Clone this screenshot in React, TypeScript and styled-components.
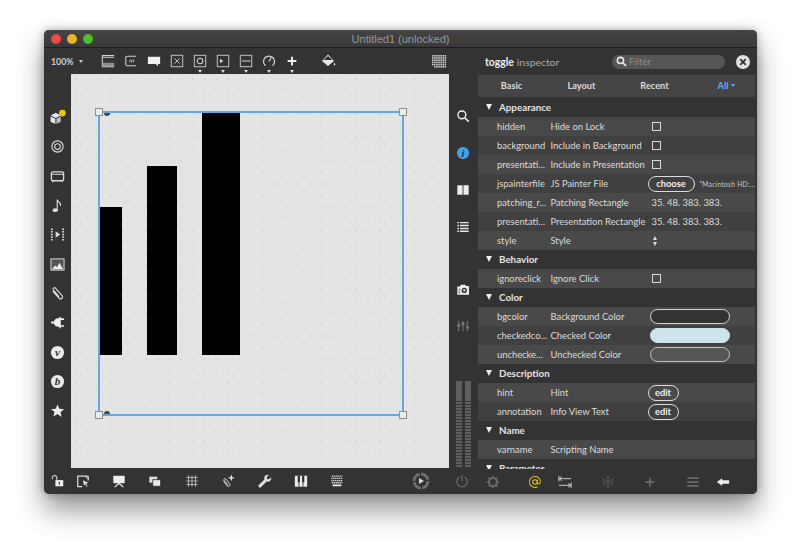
import React from "react";
import styled, { createGlobalStyle } from "styled-components";

const Global = createGlobalStyle`
  html, body { margin: 0; padding: 0; background: #fff; width: 800px; height: 553px; overflow: hidden; }
  * { box-sizing: border-box; }
`;

const Page = styled.div`
  width: 800px;
  height: 553px;
  padding: 30px 43px 59px 44px;
  background: #fff;
  font-family: Lato, "Open Sans", sans-serif;
`;
const Window = styled.div`
  width: 713px;
  height: 464px;
  display: flex;
  flex-direction: column;
  border-radius: 5px;
  overflow: hidden;
  background: #333;
  box-shadow: 0 16px 28px rgba(0, 0, 0, 0.42), 0 0 10px rgba(0, 0, 0, 0.3);
`;
const TitleBar = styled.div`
  height: 18px;
  flex: none;
  position: relative;
  display: flex;
  align-items: center;
  justify-content: center;
  background: linear-gradient(#444, #393939);
  border-bottom: 1px solid #1c1c1c;
  color: #979797;
  font: 11px "Liberation Sans", Arial, sans-serif;
`;
const Lights = styled.div`
  position: absolute;
  left: 7px;
  top: 4px;
  display: flex;
  gap: 6px;
`;
const Light = styled.span<{ $c: string }>`
  width: 10px;
  height: 10px;
  border-radius: 50%;
  background: ${(p) => p.$c};
`;
const Body = styled.div`
  flex: 1;
  min-height: 0;
  display: flex;
`;
const Main = styled.div`
  width: 433px;
  flex: none;
  display: grid;
  grid-template-columns: 27px 378px 28px;
  grid-template-rows: 26px 394px 26px;
`;
const TopBar = styled.div`
  grid-column: 1 / -1;
  display: flex;
  align-items: center;
  padding: 0 26.5px 0 7px;
  color: #d8d8d8;
`;
const Zoom = styled.div`
  width: 45.5px;
  display: flex;
  align-items: center;
  gap: 5px;
  font-size: 8.8px;
  font-weight: 700;
  color: #cfcfcf;
`;
const Caret = styled.span`
  width: 0;
  height: 0;
  border-left: 2.5px solid transparent;
  border-right: 2.5px solid transparent;
  border-top: 3.5px solid #ccc;
`;
const ToolButton = styled.div<{ $gapLeft?: number; $auto?: boolean }>`
  width: 23px;
  height: 26px;
  flex: none;
  display: flex;
  align-items: center;
  justify-content: center;
  margin-left: ${(p) => (p.$auto ? "auto" : `${p.$gapLeft || 0}px`)};
  color: #d4d4d4;
  position: relative;
`;
const MenuMark = styled.span`
  position: absolute;
  bottom: 1px;
  left: 9px;
  width: 0;
  height: 0;
  border-left: 2.5px solid transparent;
  border-right: 2.5px solid transparent;
  border-top: 3px solid #ddd;
`;
const LeftRail = styled.div`
  display: flex;
  flex-direction: column;
  padding-top: 29px;
`;
const RailSlot = styled.div<{ $h: number }>`
  height: ${(p) => p.$h}px;
  flex: none;
  display: flex;
  align-items: center;
  justify-content: center;
  color: #dcdcdc;
`;
const Canvas = styled.div`
  position: relative;
  background-color: #e4e4e4;
  background-image: radial-gradient(circle at center, #c0c0c0 0, #c0c0c0 0.5px, transparent 0.8px);
  background-size: 11.7px 11.7px;
  background-position: -1px -1px;
  overflow: hidden;
`;
const Bar = styled.div<{ $l: number; $t: number; $w: number; $h: number }>`
  position: absolute;
  left: ${(p) => p.$l}px;
  top: ${(p) => p.$t}px;
  width: ${(p) => p.$w}px;
  height: ${(p) => p.$h}px;
  background: #000;
`;
const Selection = styled.div`
  position: absolute;
  left: 27px;
  top: 37px;
  width: 306px;
  height: 305px;
  border: 2px solid #68a8e2;
`;
const Handle = styled.span<{ $x: "l" | "r"; $y: "t" | "b" }>`
  position: absolute;
  ${(p) => (p.$x === "l" ? "left: -5px;" : "right: -5px;")}
  ${(p) => (p.$y === "t" ? "top: -5px;" : "bottom: -5px;")}
  width: 8px;
  height: 8px;
  background: #e6eef6;
  border: 1px solid #8e8e8e;
`;
const Inlet = styled.span<{ $y: "t" | "b" }>`
  position: absolute;
  left: 4px;
  ${(p) => (p.$y === "t" ? "top: 0;" : "bottom: 0;")}
  width: 6px;
  height: 3px;
  background: #444;
  border-radius: ${(p) => (p.$y === "t" ? "0 0 3px 3px" : "3px 3px 0 0")};
`;
const RightRail = styled.div`
  display: flex;
  flex-direction: column;
  align-items: center;
  padding-top: 32px;
`;
const Meters = styled.div`
  margin-top: auto;
  margin-bottom: 1px;
  display: flex;
  gap: 3px;
`;
const Meter = styled.div`
  width: 6px;
  height: 86px;
  background: repeating-linear-gradient(#5f5f5f 0 2px, #383838 2px 3px);
  position: relative;
  &::before {
    content: "";
    position: absolute;
    inset: 0 0 auto 0;
    height: 19px;
    background: #5f5f5f;
  }
`;
const BottomBar = styled.div`
  grid-column: 1 / -1;
  display: flex;
  align-items: center;
  padding-left: 2.5px;
`;
const BottomButton = styled.div<{ $w: number; $lead?: number }>`
  width: ${(p) => p.$w}px;
  margin-left: ${(p) => p.$lead || 0}px;
  flex: none;
  display: flex;
  justify-content: center;
  align-items: center;
  color: #d8d8d8;
`;
const Inspector = styled.div`
  flex: 1;
  min-width: 0;
  display: flex;
  flex-direction: column;
  padding: 0 2px 0 1px;
  background: #333;
`;
const InspectorHead = styled.div`
  height: 27px;
  flex: none;
  display: flex;
  align-items: center;
  padding: 0 5px 0 7px;
  font-size: 10.4px;
  color: #aaa;
`;
const HeadBold = styled.b`
  color: #eee;
  margin-right: 3px;
`;
const Filter = styled.div`
  margin-left: auto;
  width: 113px;
  height: 14px;
  display: flex;
  align-items: center;
  gap: 2px;
  padding-left: 4px;
  border-radius: 7px;
  background: #565656;
  color: #8c8c8c;
  font-size: 9.6px;
`;
const Close = styled.div`
  width: 14px;
  height: 14px;
  margin-left: 11px;
  border-radius: 50%;
  background: #e2e2e2;
  display: flex;
  align-items: center;
  justify-content: center;
`;
const Tabs = styled.div`
  height: 22px;
  flex: none;
  display: grid;
  grid-template-columns: 67px 73px 73px 71px;
  align-items: center;
  justify-items: center;
  padding-bottom: 2px;
  background: #454545;
  font-size: 9.2px;
  font-weight: 700;
  color: #dadada;
`;
const AllTab = styled.span`
  display: flex;
  align-items: center;
  gap: 3px;
  color: #5fb0ee;
`;
const BlueCaret = styled.span`
  width: 0;
  height: 0;
  border-left: 2.5px solid transparent;
  border-right: 2.5px solid transparent;
  border-top: 3px solid #5fb0ee;
`;
const List = styled.div`
  flex: 1;
  min-height: 0;
  overflow: hidden;
  margin-top: 1px;
`;
const SectionHead = styled.div`
  height: 19px;
  display: flex;
  align-items: center;
  padding: 0 0 1px 8px;
  gap: 7px;
  font-size: 9.8px;
  font-weight: 700;
  color: #e3e3e3;
  background: #333;
`;
const Tri = styled.span`
  width: 0;
  height: 0;
  border-left: 3.5px solid transparent;
  border-right: 3.5px solid transparent;
  border-top: 6px solid #eee;
`;
const Row = styled.div<{ $alt: boolean }>`
  height: 19px;
  display: grid;
  grid-template-columns: 53.5px 101px 1fr;
  align-items: center;
  padding-left: 19px;
  background: ${(p) => (p.$alt ? "#404040" : "#494949")};
  font-size: 9.4px;
  color: #dcdcdc;
  white-space: nowrap;
`;
const Value = styled.div`
  display: flex;
  align-items: center;
  gap: 5px;
  min-width: 0;
`;
const Check = styled.span`
  width: 9px;
  height: 9px;
  border: 1px solid #d8d8d8;
`;
const PillButton = styled.span<{ $w: number }>`
  width: ${(p) => p.$w}px;
  height: 16px;
  margin-left: -4px;
  flex: none;
  display: flex;
  align-items: center;
  justify-content: center;
  border: 1px solid #dcdcdc;
  border-radius: 8px;
  font-weight: 700;
  color: #f0f0f0;
`;
const PathText = styled.span`
  font-size: 6.6px;
  letter-spacing: 0.3px;
  color: #ccc;
`;
const Swatch = styled.span<{ $fill: string; $line: string }>`
  width: 80px;
  height: 15px;
  margin-left: -2px;
  border-radius: 8px;
  background: ${(p) => p.$fill};
  border: 1px solid ${(p) => p.$line};
`;
const Stepper = styled.span`
  display: flex;
  flex-direction: column;
  gap: 2px;
  margin-left: 1px;
`;
const StepUp = styled.span`
  width: 0;
  height: 0;
  border-left: 2.5px solid transparent;
  border-right: 2.5px solid transparent;
  border-bottom: 4px solid #ddd;
`;
const StepDown = styled(StepUp)`
  border-bottom: 0;
  border-top: 4px solid #ddd;
`;
const InspectorFoot = styled.div`
  height: 25px;
  flex: none;
  display: flex;
  align-items: center;
  background: #333;
`;
const FootIcon = styled.div<{ $ml: number }>`
  margin-left: ${(p) => p.$ml}px;
  width: 14px;
  display: flex;
  justify-content: center;
`;

type IconProps = { s?: number; children: React.ReactNode };
const Svg = ({ s = 16, children }: IconProps) => (
  <svg width={s} height={s} viewBox="0 0 16 16" fill="none" stroke="none">
    {children}
  </svg>
);
const sw = { stroke: "currentColor", strokeWidth: 1.2, fill: "none" };
const f = { fill: "currentColor" };

const icons: Record<string, React.ReactNode> = {
  panel: (<><path d="M1.5 1v14" {...sw} /><path d="M2 1.6h13M2 3.6h13" {...sw} /><rect x="2" y="10" width="13" height="4" fill="#8b8b8b" /><path d="M2 14.5h13" {...sw} /></>),
  comment: (<><path d="M14 2.5H4a2 2 0 0 0-2 2v7a2 2 0 0 0 2 2h10" {...sw} /><path d="M6.5 9.5l.8-3M8.5 9.5l.8-3M10.5 9.5l.8-3" stroke="currentColor" strokeWidth="1" /></>),
  bubble: (<path d="M1 3h14v8.5h-2.5V14L10 11.5H1z" fill="#f0f0f0" />),
  xbox: (<><rect x="1.5" y="1.5" width="13" height="13" stroke="#bbb" strokeWidth="1.2" /><path d="M5 5l6 6M11 5l-6 6" {...sw} strokeWidth={1} /></>),
  obox: (<><rect x="1.5" y="1.5" width="13" height="13" stroke="#bbb" strokeWidth="1.2" /><circle cx="8" cy="8" r="3.2" {...sw} /></>),
  pbox: (<><rect x="1.5" y="1.5" width="13" height="13" stroke="#bbb" strokeWidth="1.2" /><path d="M4.5 5.5l4 2.5-4 2.5z" {...f} /></>),
  mbox: (<><rect x="1.5" y="1.5" width="13" height="13" stroke="#bbb" strokeWidth="1.2" /><path d="M3 8h10" {...sw} /></>),
  dial: (<><path d="M4 13.5a6.3 6.3 0 1 1 8 0" {...sw} strokeWidth={1.4} /><path d="M8 8.5l2.5-4.5" {...sw} strokeWidth={1.4} /></>),
  plus: (<path d="M8 3v10M3 8h10" stroke="#eee" strokeWidth="2.2" />),
  bucket: (<><path d="M8 1.5L14 8l-6 5L2 8z" fill="#e8e8e8" /><path d="M3.5 7L8 3l4.5 4z" fill="#333" /><path d="M14.5 9.5c1 1.6 1 3 0 3s-1-1.4 0-3z" fill="#e8e8e8" /></>),
  matrix: (<>{Array.from({ length: 6 }).map((_, y) => Array.from({ length: 7 }).map((_, x) => (x + 6 - y >= 2 ? <rect key={x + "-" + y} x={1 + x * 2.1} y={2 + y * 2.2} width="1.5" height="1.6" fill="#cfcfcf" /> : null)))}</>),
  cubes: (<><path d="M1.5 6L6.5 3.6 11 6 6.5 8.4z" fill="#e8e8e8" /><path d="M1.5 7L6 9.2v5L1.5 12z" fill="#e8e8e8" /><path d="M11 7L7 9.2v5l4-2.2z" fill="#bdbdbd" /><circle cx="12.6" cy="3.8" r="3.2" fill="#e8c80e" /></>),
  target: (<><circle cx="8" cy="8" r="6" {...sw} /><circle cx="8" cy="8" r="3" {...sw} /></>),
  strip: (<><rect x="1.5" y="3" width="13" height="9.5" rx="1.5" {...sw} strokeWidth={1.4} /><path d="M1.5 5.6h13" {...sw} /><path d="M3 12.5v1.5M13 12.5v1.5" {...sw} /></>),
  note: (<><ellipse cx="5.5" cy="13" rx="2.8" ry="2" {...f} /><path d="M7.7 13V1.5c0 2.5 4.3 3 3.5 7" {...sw} /></>),
  mediaplay: (<><path d="M6 4.5l5 3.5-5 3.5z" {...f} /><path d="M2 1.5v13M14 1.5v13" stroke="currentColor" strokeWidth="2" strokeDasharray="1.6 1.2" /></>),
  image: (<><rect x="1" y="2" width="14" height="12" fill="#555" stroke="#ddd" strokeWidth="1" /><path d="M2 13l3.5-4 2 2 2.5-5 4 7z" fill="#eee" /></>),
  clip: (<path d="M3 5.5l6.5 7.5a2.2 2.2 0 0 0 3.4-2.8L6 2.5a1.5 1.5 0 0 0-2.4 1.8l6.2 7.3" stroke="currentColor" strokeWidth="1.2" />),
  plug: (<path d="M1 7h3.2C5 4.6 6.5 3.5 8.5 3.5H10V2h1.5v1.5H15v1.7h-3.5v5.6H15v1.7h-3.5V14H10v-1.5H8.5C6.5 12.5 5 11.4 4.2 9H1z" fill="#eee" />),
  vcoin: (<><circle cx="8" cy="8" r="7" fill="#eaeaea" /><text x="8" y="11.6" textAnchor="middle" fontFamily="Liberation Serif, serif" fontSize="12" fontStyle="italic" fontWeight="700" fill="#333">v</text></>),
  bcoin: (<><circle cx="8" cy="8" r="7" fill="#eaeaea" /><text x="8" y="12" textAnchor="middle" fontFamily="Liberation Serif, serif" fontSize="12" fontStyle="italic" fontWeight="700" fill="#333">b</text></>),
  star: (<path d="M8 1.5l2 4.7 5 .4-3.8 3.3 1.2 5L8 11.8l-4.4 2.6 1.2-5L1 6.6l5-.4z" fill="#eee" />),
  search: (<><circle cx="6.7" cy="6.7" r="4.5" stroke="#eee" strokeWidth="1.6" /><path d="M10 10l4.5 4.5" stroke="#eee" strokeWidth="2" /></>),
  info: (<><circle cx="8" cy="8" r="7" fill="#3aa5ee" /><text x="8" y="12" textAnchor="middle" fontFamily="Liberation Serif, serif" fontSize="11.5" fontStyle="italic" fontWeight="700" fill="#22303c">i</text></>),
  book: (<path d="M1.5 2.5h6v11h-6zM8.5 2.5h6v11h-6z" fill="#ececec" />),
  lines: (<><path d="M1.5 3h2M1.5 6.3h2M1.5 9.6h2M1.5 12.9h2" stroke="#e6e6e6" strokeWidth="1.7" /><path d="M4.5 3h10M4.5 6.3h10M4.5 9.6h10M4.5 12.9h10" stroke="#e6e6e6" strokeWidth="1.7" /></>),
  camera: (<><path d="M1.5 4h3l1-2h5l1 1.3h3.3v10.2H1.5z" fill="#f0f0f0" /><circle cx="9.5" cy="8.5" r="3" fill="#333" /><circle cx="9.5" cy="8.5" r="1.3" fill="#eee" /><path d="M3 7h2M3 9h2M3 11h2" stroke="#555" strokeWidth="1" /></>),
  sliders: (<><path d="M3 2v12M8 2v12M13 2v12" stroke="#777" strokeWidth="1.2" /><rect x="1.3" y="6" width="3.4" height="3" fill="#777" /><rect x="6.3" y="4" width="3.4" height="3" fill="#777" /><rect x="11.3" y="8" width="3.4" height="3" fill="#777" /></>),
  unlock: (<><path d="M1.5 6V4.4a2.6 2.6 0 0 1 5.2 0V7" {...sw} /><rect x="5" y="7" width="9" height="7" fill="#eee" /><rect x="8.8" y="9" width="1.4" height="3" fill="#333" /></>),
  present: (<><path d="M14 2.5H2v12h5M14 2.5v5" stroke="#ddd" strokeWidth="1.4" /><path d="M8 7l6 3-2.4 1 1.7 3-1 .6-1.8-3L9 13z" fill="#ddd" /><path d="M10.5 2.5L14 6" stroke="#ddd" strokeWidth="1" /></>),
  easel: (<><rect x="1.5" y="2" width="13" height="8.5" fill="#ececec" /><path d="M8 10.5L3 15M8 10.5l5 4.5" stroke="#ececec" strokeWidth="1.4" /></>),
  windows: (<><rect x="1.5" y="3" width="9" height="7" fill="#ddd" /><rect x="5.5" y="6.5" width="9" height="7.5" fill="#ececec" stroke="#333" strokeWidth="1" /></>),
  hash: (<path d="M4 1.5v13M8 1.5v13M12 1.5v13M1.5 4h13M1.5 8h13M1.5 12h13" stroke="#bdbdbd" strokeWidth="1" />),
  clipplus: (<><path d="M2.5 7.5l4.5 6a1.8 1.8 0 0 0 2.9-2.2L5.6 5.7a1.2 1.2 0 0 0-2 1.4l4 5.3" stroke="#ddd" strokeWidth="1.1" /><path d="M11.8 1.5v6M8.8 4.5h6" stroke="#eee" strokeWidth="1.4" /></>),
  wrench: (<path d="M15 3.7l-2.5 2.4-2-.5-.5-2L12.4 1a4 4 0 0 0-5 5.2L1 12.5a1.7 1.7 0 0 0 2.5 2.4l6.4-6.4A4 4 0 0 0 15 3.7z" fill="#e2e2e2" />),
  piano: (<><rect x="1" y="2" width="14" height="12.5" fill="#ececec" /><path d="M5.7 2v12.5M10.3 2v12.5" stroke="#333" strokeWidth="1" /><rect x="4.2" y="2" width="2.6" height="7.5" fill="#333" /><rect x="9.2" y="2" width="2.6" height="7.5" fill="#333" /></>),
  keys: (<><path d="M2 2.5h12M1.5 5h13M1.5 7.5h13M2 10h12" stroke="#ddd" strokeWidth="1.5" strokeDasharray="1.5 .7" /><path d="M3 13h10" stroke="#eee" strokeWidth="2" /></>),
  playdial: (<><circle cx="8" cy="8" r="6.2" stroke="#6e6e6e" strokeWidth="2.6" strokeDasharray="8.5 1.2" /><path d="M6.3 5.3l4.3 2.7-4.3 2.7z" fill="#ddd" /></>),
  power: (<><path d="M5 3.5a6 6 0 1 0 6 0" stroke="#666" strokeWidth="1.6" /><path d="M8 1.5v6.5" stroke="#666" strokeWidth="1.6" /></>),
  gear: (<><circle cx="8" cy="8" r="4.6" stroke="#666" strokeWidth="2.6" /><path d="M8 .8v2.4M8 12.8v2.4M.8 8h2.4M12.8 8h2.4M2.9 2.9l1.7 1.7M11.4 11.4l1.7 1.7M13.1 2.9l-1.7 1.7M4.6 11.4l-1.7 1.7" stroke="#666" strokeWidth="1.8" /></>),
  at: (<><circle cx="8" cy="8" r="2.6" stroke="#e8c80e" strokeWidth="1.2" /><path d="M10.6 5.4v3.8c0 1.8 3.6 1.5 3.6-1.4A6.3 6.3 0 1 0 11 13.4" stroke="#e8c80e" strokeWidth="1.2" /></>),
  arrows: (<><path d="M1 1v6.5M1.5 4.2H15M1.5 4.2l3-2.4M1.5 4.2l3 2.4M15 8.5V15M1 11.8h13.5M14.5 11.8l-3-2.4M14.5 11.8l-3 2.4" stroke="#ddd" strokeWidth="1" /></>),
  snow: (<path d="M8 1v14M2 4.5l12 7M14 4.5l-12 7M6 2.5L8 4.5l2-2M6 13.5l2-2 2 2M1.5 7l2.5 1-2.5 1M14.5 7L12 8l2.5 1" stroke="#5d5d5d" strokeWidth="1" />),
  addDim: (<path d="M8 3v10M3 8h10" stroke="#666" strokeWidth="2.2" />),
  burger: (<path d="M1.5 3.5h13M1.5 8h13M1.5 12.5h13" stroke="#6a6a6a" strokeWidth="2" />),
  back: (<path d="M1 8l6-4.2V6h8v4H7v2.2z" fill="#eee" />),
};

const Icon = ({ n, s }: { n: string; s?: number }) => <Svg s={s}>{icons[n]}</Svg>;

const topTools: [string, boolean][] = [
  ["panel", false], ["comment", false], ["bubble", false], ["xbox", false],
  ["obox", true], ["pbox", true], ["mbox", true], ["dial", true], ["plus", true],
];
const leftIcons = ["cubes", "target", "strip", "note", "mediaplay", "image", "clip", "plug", "vcoin", "bcoin", "star"];
const bottomIcons = ["easel", "windows", "hash", "clipplus", "wrench", "piano", "keys"];
const footIcons: [string, number][] = [["gear", 8], ["at", 28], ["arrows", 16], ["snow", 29], ["addDim", 28], ["burger", 29], ["back", 16]];

type V =
  | { k: "check" } | { k: "num" } | { k: "choose" } | { k: "step" } | { k: "none" } | { k: "edit" }
  | { k: "swatch"; fill: string; line: string };

type Item = [string, string, V];
const sections: [string, Item[]][] = [
  ["Appearance", [
    ["hidden", "Hide on Lock", { k: "check" }],
    ["background", "Include in Background", { k: "check" }],
    ["presentati...", "Include in Presentation", { k: "check" }],
    ["jspainterfile", "JS Painter File", { k: "choose" }],
    ["patching_r...", "Patching Rectangle", { k: "num" }],
    ["presentati...", "Presentation Rectangle", { k: "num" }],
    ["style", "Style", { k: "step" }],
  ]],
  ["Behavior", [["ignoreclick", "Ignore Click", { k: "check" }]]],
  ["Color", [
    ["bgcolor", "Background Color", { k: "swatch", fill: "#333", line: "#d8d8d8" }],
    ["checkedco...", "Checked Color", { k: "swatch", fill: "#cfe4e8", line: "#cfe4e8" }],
    ["unchecke...", "Unchecked Color", { k: "swatch", fill: "#565656", line: "#c4c4c4" }],
  ]],
  ["Description", [
    ["hint", "Hint", { k: "edit" }],
    ["annotation", "Info View Text", { k: "edit" }],
  ]],
  ["Name", [["varname", "Scripting Name", { k: "none" }]]],
  ["Parameter", []],
];

const renderValue = (v: V) => {
  switch (v.k) {
    case "check": return <Check />;
    case "num": return <span>35. 48. 383. 383.</span>;
    case "choose": return (<><PillButton $w={47}>choose</PillButton><PathText>"Macintosh HD:...</PathText></>);
    case "edit": return <PillButton $w={31}>edit</PillButton>;
    case "step": return <Stepper><StepUp /><StepDown /></Stepper>;
    case "swatch": return <Swatch $fill={v.fill} $line={v.line} />;
    default: return null;
  }
};

export default function App() {
  return (
    <Page>
      <Global />
      <Window>
        <TitleBar>
          <Lights>
            <Light $c="#ee4a45" />
            <Light $c="#e6b822" />
            <Light $c="#4fc02c" />
          </Lights>
          Untitled1 (unlocked)
        </TitleBar>
        <Body>
          <Main>
            <TopBar>
              <Zoom>100% <Caret /></Zoom>
              {topTools.map(([n, m], i) => (
                <ToolButton key={i}>
                  <Icon n={n} s={14} />
                  {m && <MenuMark />}
                </ToolButton>
              ))}
              <ToolButton $gapLeft={13}><Icon n="bucket" /></ToolButton>
              <ToolButton $auto><Icon n="matrix" /></ToolButton>
            </TopBar>
            <LeftRail>
              {leftIcons.map((n) => (
                <RailSlot key={n} $h={29.3}><Icon n={n} s={n === "cubes" ? 17 : 15} /></RailSlot>
              ))}
            </LeftRail>
            <Canvas>
              <Bar $l={28} $t={133} $w={23} $h={148} />
              <Bar $l={76} $t={92} $w={30} $h={189} />
              <Bar $l={131} $t={38} $w={38} $h={243} />
              <Selection>
                <Handle $x="l" $y="t" />
                <Handle $x="r" $y="t" />
                <Handle $x="l" $y="b" />
                <Handle $x="r" $y="b" />
                <Inlet $y="t" />
                <Inlet $y="b" />
              </Selection>
            </Canvas>
            <RightRail>
              <RailSlot $h={20}><Icon n="search" s={14} /></RailSlot>
              <RailSlot $h={17} />
              <RailSlot $h={20}><Icon n="info" s={14} /></RailSlot>
              <RailSlot $h={17} />
              <RailSlot $h={20}><Icon n="book" s={14} /></RailSlot>
              <RailSlot $h={17} />
              <RailSlot $h={19}><Icon n="lines" s={14} /></RailSlot>
              <RailSlot $h={44} />
              <RailSlot $h={20}><Icon n="camera" s={14} /></RailSlot>
              <RailSlot $h={16} />
              <RailSlot $h={20}><Icon n="sliders" s={14} /></RailSlot>
              <Meters><Meter /><Meter /></Meters>
            </RightRail>
            <BottomBar>
              <BottomButton $w={23}><Icon n="unlock" s={14} /></BottomButton>
              <BottomButton $w={27}><Icon n="present" s={14} /></BottomButton>
              {bottomIcons.map((n, i) => (
                <BottomButton key={n} $w={36.4} $lead={i === 0 ? 4.4 : 0}><Icon n={n} s={14} /></BottomButton>
              ))}
              <BottomButton $w={36} $lead={47}><Icon n="playdial" s={18} /></BottomButton>
              <BottomButton $w={28} $lead={9.3}><Icon n="power" s={14} /></BottomButton>
            </BottomBar>
          </Main>
          <Inspector>
            <InspectorHead>
              <HeadBold>toggle</HeadBold> inspector
              <Filter>
                <svg width="11" height="11" viewBox="0 0 16 16" fill="none">
                  <circle cx="6.5" cy="6.5" r="4.5" stroke="#e8e8e8" strokeWidth="2.2" />
                  <path d="M10 10l4.5 4.5" stroke="#e8e8e8" strokeWidth="2.6" />
                </svg>
                Filter
              </Filter>
              <Close>
                <svg width="8" height="8" viewBox="0 0 8 8">
                  <path d="M1.2 1.2l5.6 5.6M6.8 1.2L1.2 6.8" stroke="#333" strokeWidth="1.8" />
                </svg>
              </Close>
            </InspectorHead>
            <Tabs>
              <span>Basic</span>
              <span>Layout</span>
              <span>Recent</span>
              <AllTab>All <BlueCaret /></AllTab>
            </Tabs>
            <List>
              {sections.map(([title, rows]) => (
                <div key={title}>
                  <SectionHead><Tri />{title}</SectionHead>
                  {rows.map(([attr, label, v], i) => (
                    <Row key={attr + label} $alt={i % 2 === 1}>
                      <span>{attr}</span>
                      <span>{label}</span>
                      <Value>{renderValue(v)}</Value>
                    </Row>
                  ))}
                </div>
              ))}
            </List>
            <InspectorFoot>
              {footIcons.map(([n, ml]) => (
                <FootIcon key={n} $ml={ml}><Icon n={n} s={14} /></FootIcon>
              ))}
            </InspectorFoot>
          </Inspector>
        </Body>
      </Window>
    </Page>
  );
}
